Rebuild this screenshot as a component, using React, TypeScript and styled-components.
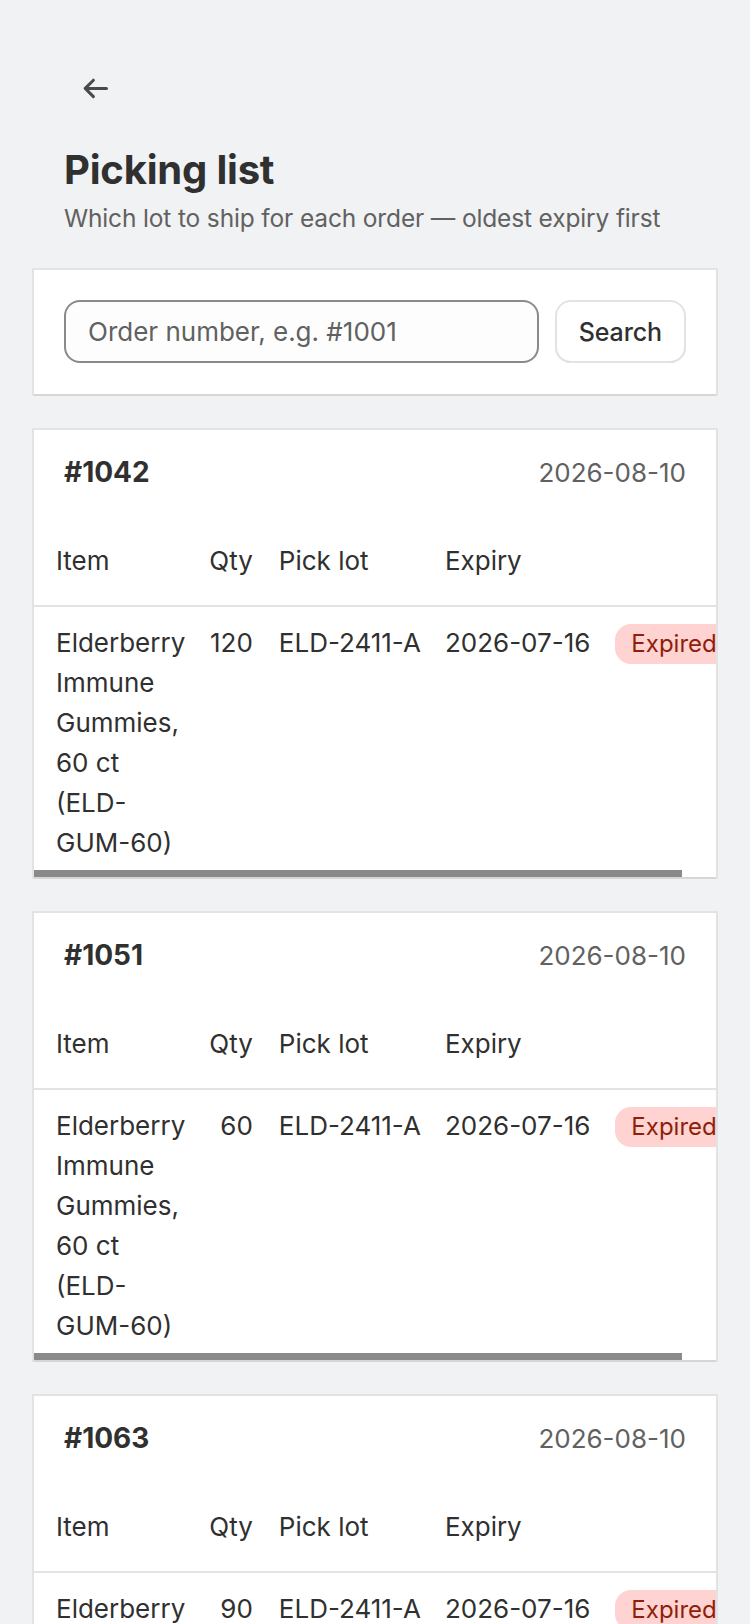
import React, { useLayoutEffect, useRef, useState } from 'react';
import styled, { createGlobalStyle } from 'styled-components';

const GlobalStyle = createGlobalStyle`
    html, body {
        margin: 0;
        padding: 0;
        background: #f1f2f4;
    }
    body {
        font-family: Inter, "Noto Sans", "Liberation Sans", sans-serif;
        color: #303030;
        -webkit-font-smoothing: antialiased;
    }
    * {
        box-sizing: border-box;
    }
`;

type Line = {
    item: string;
    qty: number;
    lot: string;
    expiry: string;
    status: string;
};

type Order = {
    number: string;
    date: string;
    lines: Line[];
};

const orders: Order[] = [
    {
        number: '#1042',
        date: '2026-08-10',
        lines: [{ item: 'Elderberry Immune Gummies, 60 ct (ELD-GUM-60)', qty: 120, lot: 'ELD-2411-A', expiry: '2026-07-16', status: 'Expired' }],
    },
    {
        number: '#1051',
        date: '2026-08-10',
        lines: [{ item: 'Elderberry Immune Gummies, 60 ct (ELD-GUM-60)', qty: 60, lot: 'ELD-2411-A', expiry: '2026-07-16', status: 'Expired' }],
    },
    {
        number: '#1063',
        date: '2026-08-10',
        lines: [{ item: 'Elderberry Immune Gummies, 60 ct (ELD-GUM-60)', qty: 90, lot: 'ELD-2411-A', expiry: '2026-07-16', status: 'Expired' }],
    },
];

const ArrowLeft = () => (
    <svg width="40" height="40" viewBox="0 0 20 20" fill="none">
        <path
            d="M15.25 10.2H4.6M8.7 6.1L4.6 10.2L8.7 14.3"
            stroke="#4a4a4a"
            strokeWidth="1.5"
            strokeLinecap="round"
            strokeLinejoin="round"
        />
    </svg>
);

// scrollbars are hidden in the screenshot browser, so the thumb is drawn over the table
const LinesTable: React.FC<{ lines: Line[] }> = ({ lines }) => {
    const scrollerRef = useRef<HTMLDivElement>(null);
    const [thumb, setThumb] = useState(0);

    useLayoutEffect(() => {
        const el = scrollerRef.current;
        if (!el) return;
        if (el.scrollWidth > el.clientWidth) {
            setThumb((el.clientWidth * el.clientWidth) / el.scrollWidth);
        } else {
            setThumb(0);
        }
    }, [lines]);

    return (
        <ScrollArea>
            <Scroller ref={scrollerRef}>
                <Table>
                    <thead>
                        <tr>
                            <Th>Item</Th>
                            <Th numeric>Qty</Th>
                            <Th>Pick lot</Th>
                            <Th>Expiry</Th>
                            <Th />
                        </tr>
                    </thead>
                    <tbody>
                        {lines.map(line => (
                            <tr key={line.lot}>
                                <Td wrap>{line.item}</Td>
                                <Td numeric>{line.qty}</Td>
                                <Td>{line.lot}</Td>
                                <Td>{line.expiry}</Td>
                                <Td>
                                    <Badge>{line.status}</Badge>
                                </Td>
                            </tr>
                        ))}
                    </tbody>
                </Table>
            </Scroller>
            {thumb > 0 && <ScrollThumb style={{ width: `${thumb}px` }} />}
        </ScrollArea>
    );
};

const App = () => {
    return (
        <>
            <GlobalStyle />
            <Page>
                <Header>
                    <BackButton type="button" aria-label="Back">
                        <ArrowLeft />
                    </BackButton>
                    <TitleBlock>
                        <Title>Picking list</Title>
                        <Subtitle>Which lot to ship for each order — oldest expiry first</Subtitle>
                    </TitleBlock>
                </Header>

                <Stack>
                    <SearchCard>
                        <SearchRow>
                            <SearchInput placeholder="Order number, e.g. #1001" />
                            <SearchButton type="button">Search</SearchButton>
                        </SearchRow>
                    </SearchCard>

                    {orders.map(order => (
                        <OrderCard key={order.number}>
                            <OrderHeader>
                                <OrderNumber>{order.number}</OrderNumber>
                                <OrderDate>{order.date}</OrderDate>
                            </OrderHeader>
                            <LinesTable lines={order.lines} />
                        </OrderCard>
                    ))}
                </Stack>
            </Page>
        </>
    );
};

export default App;

const Page = styled.div`
    width: 750px;
    min-height: 1624px;
    padding-bottom: 64px;
`;

const Header = styled.header`
    display: flex;
    flex-direction: column;
    align-items: flex-start;
    padding: 68px 64px 30px;
`;

const BackButton = styled.button`
    display: flex;
    align-items: center;
    justify-content: center;
    width: 40px;
    height: 40px;
    margin-left: 12px;
    padding: 0;
    border: none;
    background: transparent;
    cursor: pointer;
`;

const TitleBlock = styled.div`
    display: flex;
    flex-direction: column;
    gap: 4px;
    margin-top: 38px;
`;

const Title = styled.h1`
    margin: 0;
    font-size: 40px;
    line-height: 48px;
    font-weight: 700;
    color: #303030;
    letter-spacing: -0.2px;
`;

const Subtitle = styled.p`
    margin: 0;
    font-size: 24.5px;
    line-height: 40px;
    letter-spacing: -0.15px;
    color: #616161;
    white-space: nowrap;
`;

const Stack = styled.div`
    display: flex;
    flex-direction: column;
    gap: 32px;
    padding: 0 32px;
`;

const Card = styled.section`
    position: relative;
    background: #ffffff;

    &::after {
        content: '';
        position: absolute;
        inset: 0;
        pointer-events: none;
        box-shadow:
            inset 0 2px 0 #e3e3e3,
            inset 2px 0 0 #e3e3e3,
            inset -2px 0 0 #e3e3e3,
            inset 0 -2px 0 #d6d6d6;
    }
`;

const SearchCard = styled(Card)`
    padding: 32px 32px 33px;
`;

const SearchRow = styled.div`
    display: flex;
    gap: 16px;
`;

const SearchInput = styled.input`
    flex: 1;
    min-width: 0;
    height: 63px;
    padding: 0 22px;
    border: 2px solid #8a8a8a;
    border-radius: 16px;
    background: #fdfdfd;
    font-family: inherit;
    font-size: 26px;
    color: #303030;
    outline: none;

    &::placeholder {
        color: #616161;
    }
`;

const SearchButton = styled.button`
    height: 63px;
    padding: 0 24px;
    border: none;
    border-radius: 16px;
    background: #ffffff;
    box-shadow:
        inset 0 0 0 2px #e3e3e3,
        inset 0 -2px 0 #d0d0d0;
    font-family: inherit;
    font-size: 25px;
    font-weight: 550;
    letter-spacing: -0.1px;
    color: #303030;
    cursor: pointer;
`;

const OrderCard = styled(Card)`
    padding-bottom: 2px;
`;

const OrderHeader = styled.div`
    display: flex;
    justify-content: space-between;
    align-items: baseline;
    padding: 24px 32px;
`;

const OrderNumber = styled.h2`
    margin: 0;
    font-size: 28px;
    line-height: 40px;
    font-weight: 700;
    color: #303030;
`;

const OrderDate = styled.span`
    font-size: 26px;
    line-height: 40px;
    color: #616161;
`;

const ScrollArea = styled.div`
    position: relative;
`;

const Scroller = styled.div`
    overflow-x: auto;
    overflow-y: hidden;
    scrollbar-width: none;
`;

const ScrollThumb = styled.div`
    position: absolute;
    left: 0;
    bottom: 0;
    height: 7px;
    background: #8a8a8a;
`;

const Table = styled.table`
    border-collapse: separate;
    border-spacing: 0;
    font-size: 26px;
    line-height: 40px;
    color: #303030;
`;

const Th = styled.th<{ numeric?: boolean }>`
    padding: 24px 13px;
    border-bottom: 2px solid #e3e3e3;
    font-weight: 400;
    text-align: ${props => (props.numeric ? 'right' : 'left')};
    white-space: nowrap;

    &:first-child {
        padding-left: 24px;
        padding-right: 11px;
    }
    &:nth-child(3) {
        padding-right: 11px;
    }
    &:last-child {
        padding-left: 12px;
        padding-right: 23px;
    }
`;

const Td = styled.td<{ numeric?: boolean; wrap?: boolean }>`
    padding: 16px 13px 14px;
    vertical-align: top;
    text-align: ${props => (props.numeric ? 'right' : 'left')};
    white-space: ${props => (props.wrap ? 'normal' : 'nowrap')};

    &:first-child {
        padding-left: 24px;
        padding-right: 11px;
    }
    &:nth-child(3) {
        padding-right: 11px;
    }
    &:last-child {
        padding-left: 12px;
        padding-right: 23px;
    }
`;

const Badge = styled.span`
    display: inline-block;
    padding: 2px 16px;
    border-radius: 16px;
    background: #fed3d1;
    color: #8e1f0b;
    font-size: 24px;
    line-height: 36px;
`;
